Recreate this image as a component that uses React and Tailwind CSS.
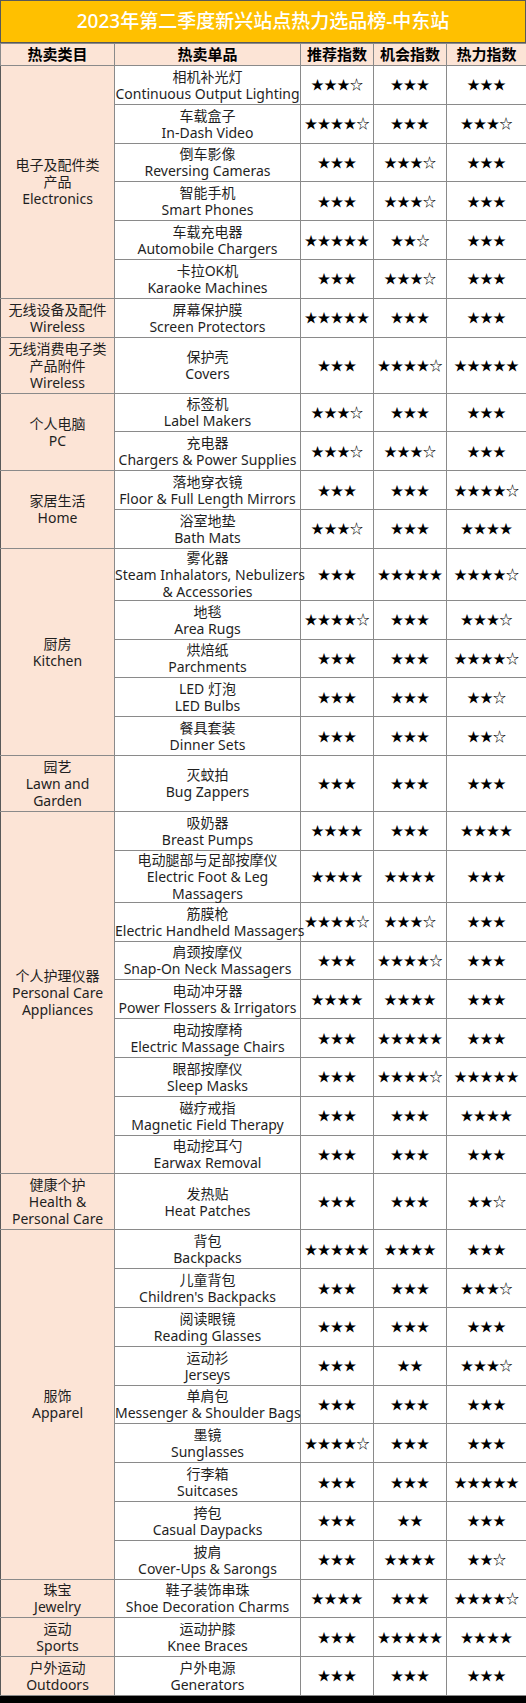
const groups = [
  {
    cat: ["电子及配件类", "产品", "Electronics"],
    rows: [
      ["相机补光灯", ["Continuous Output Lighting"], "★★★☆", "★★★", "★★★"],
      ["车载盒子", ["In-Dash Video"], "★★★★☆", "★★★", "★★★☆"],
      ["倒车影像", ["Reversing Cameras"], "★★★", "★★★☆", "★★★"],
      ["智能手机", ["Smart Phones"], "★★★", "★★★☆", "★★★"],
      ["车载充电器", ["Automobile Chargers"], "★★★★★", "★★☆", "★★★"],
      ["卡拉OK机", ["Karaoke Machines"], "★★★", "★★★☆", "★★★"],
    ],
  },
  {
    cat: ["无线设备及配件", "Wireless"],
    rows: [["屏幕保护膜", ["Screen Protectors"], "★★★★★", "★★★", "★★★"]],
  },
  {
    cat: ["无线消费电子类", "产品附件", "Wireless"],
    tall: true,
    rows: [["保护壳", ["Covers"], "★★★", "★★★★☆", "★★★★★"]],
  },
  {
    cat: ["个人电脑", "PC"],
    rows: [
      ["标签机", ["Label Makers"], "★★★☆", "★★★", "★★★"],
      ["充电器", ["Chargers & Power Supplies"], "★★★☆", "★★★☆", "★★★"],
    ],
  },
  {
    cat: ["家居生活", "Home"],
    rows: [
      ["落地穿衣镜", ["Floor & Full Length Mirrors"], "★★★", "★★★", "★★★★☆"],
      ["浴室地垫", ["Bath Mats"], "★★★☆", "★★★", "★★★★"],
    ],
  },
  {
    cat: ["厨房", "Kitchen"],
    rows: [
      ["雾化器", ["Steam Inhalators, Nebulizers", "& Accessories"], "★★★", "★★★★★", "★★★★☆"],
      ["地毯", ["Area Rugs"], "★★★★☆", "★★★", "★★★☆"],
      ["烘焙纸", ["Parchments"], "★★★", "★★★", "★★★★☆"],
      ["LED 灯泡", ["LED Bulbs"], "★★★", "★★★", "★★☆"],
      ["餐具套装", ["Dinner Sets"], "★★★", "★★★", "★★☆"],
    ],
  },
  {
    cat: ["园艺", "Lawn and", "Garden"],
    tall: true,
    rows: [["灭蚊拍", ["Bug Zappers"], "★★★", "★★★", "★★★"]],
  },
  {
    cat: ["个人护理仪器", "Personal Care", "Appliances"],
    rows: [
      ["吸奶器", ["Breast Pumps"], "★★★★", "★★★", "★★★★"],
      ["电动腿部与足部按摩仪", ["Electric Foot & Leg", "Massagers"], "★★★★", "★★★★", "★★★"],
      ["筋膜枪", ["Electric Handheld Massagers"], "★★★★☆", "★★★☆", "★★★"],
      ["肩颈按摩仪", ["Snap-On Neck Massagers"], "★★★", "★★★★☆", "★★★"],
      ["电动冲牙器", ["Power Flossers & Irrigators"], "★★★★", "★★★★", "★★★"],
      ["电动按摩椅", ["Electric Massage Chairs"], "★★★", "★★★★★", "★★★"],
      ["眼部按摩仪", ["Sleep Masks"], "★★★", "★★★★☆", "★★★★★"],
      ["磁疗戒指", ["Magnetic Field Therapy"], "★★★", "★★★", "★★★★"],
      ["电动挖耳勺", ["Earwax Removal"], "★★★", "★★★", "★★★"],
    ],
  },
  {
    cat: ["健康个护", "Health &", "Personal Care"],
    tall: true,
    rows: [["发热贴", ["Heat Patches"], "★★★", "★★★", "★★☆"]],
  },
  {
    cat: ["服饰", "Apparel"],
    rows: [
      ["背包", ["Backpacks"], "★★★★★", "★★★★", "★★★"],
      ["儿童背包", ["Children's Backpacks"], "★★★", "★★★", "★★★☆"],
      ["阅读眼镜", ["Reading Glasses"], "★★★", "★★★", "★★★"],
      ["运动衫", ["Jerseys"], "★★★", "★★", "★★★☆"],
      ["单肩包", ["Messenger & Shoulder Bags"], "★★★", "★★★", "★★★"],
      ["墨镜", ["Sunglasses"], "★★★★☆", "★★★", "★★★"],
      ["行李箱", ["Suitcases"], "★★★", "★★★", "★★★★★"],
      ["挎包", ["Casual Daypacks"], "★★★", "★★", "★★★"],
      ["披肩", ["Cover-Ups & Sarongs"], "★★★", "★★★★", "★★☆"],
    ],
  },
  {
    cat: ["珠宝", "Jewelry"],
    rows: [["鞋子装饰串珠", ["Shoe Decoration Charms"], "★★★★", "★★★", "★★★★☆"]],
  },
  {
    cat: ["运动", "Sports"],
    rows: [["运动护膝", ["Knee Braces"], "★★★", "★★★★★", "★★★★"]],
  },
  {
    cat: ["户外运动", "Outdoors"],
    rows: [["户外电源", ["Generators"], "★★★", "★★★", "★★★"]],
  },
];

const font = "font-['Noto_Sans','Noto_Sans_CJK_SC',sans-serif]";
const cell = "border border-[#8a8a8a] text-center align-middle p-0";

export default function App() {
  return (
    <div className={`w-[526px] bg-black ${font}`}>
      <div className="h-[43px] bg-[#ffc000] border border-[#595959] flex items-center justify-center text-white text-[19px] font-medium">
        2023年第二季度新兴站点热力选品榜-中东站
      </div>
      <table className="w-[526px] table-fixed border-collapse bg-white text-[#1f1f1f] leading-[17px]">
        <colgroup>
          <col className="w-[114px]" />
          <col className="w-[186px]" />
          <col className="w-[73px]" />
          <col className="w-[73px]" />
          <col className="w-[80px]" />
        </colgroup>
        <thead>
          <tr className="h-[22px] bg-[#fce4d6] text-black font-bold text-[15px]">
            <th className={cell}>热卖类目</th>
            <th className={cell}>热卖单品</th>
            <th className={cell}>推荐指数</th>
            <th className={cell}>机会指数</th>
            <th className={cell}>热力指数</th>
          </tr>
        </thead>
        <tbody className="text-[14px]">
          {groups.map((g) =>
            g.rows.map((r, i) => (
              <tr
                key={g.cat.join() + r[0]}
                className={g.tall ? "h-[56px]" : r[1].length > 1 ? "h-[52px]" : "h-[38.8px]"}
              >
                {i === 0 && (
                  <td rowSpan={g.rows.length} className={`${cell} bg-[#fce4d6] border-l-[#595959]`}>
                    {g.cat.map((c) => (
                      <div key={c} className="whitespace-nowrap">{c}</div>
                    ))}
                  </td>
                )}
                <td className={cell}>
                  <div>{r[0]}</div>
                  {r[1].map((e) => (
                    <div key={e} className="whitespace-nowrap">{e}</div>
                  ))}
                </td>
                <td className={`${cell} text-[13px] text-black`}>{r[2]}</td>
                <td className={`${cell} text-[13px] text-black`}>{r[3]}</td>
                <td className={`${cell} text-[13px] text-black`}>{r[4]}</td>
              </tr>
            ))
          )}
        </tbody>
      </table>
      <div className="h-[7px] bg-black" />
    </div>
  );
}
